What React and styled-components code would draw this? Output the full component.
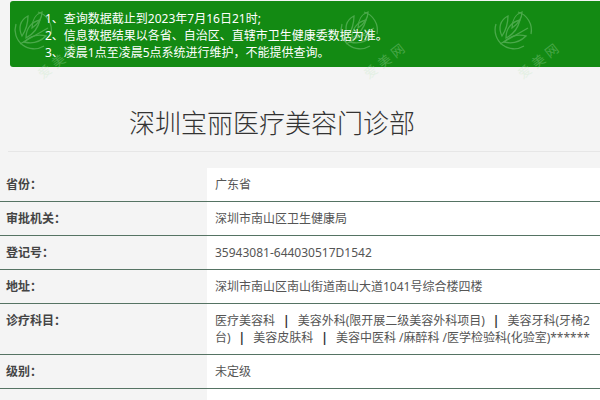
import React from 'react';
import styled, { createGlobalStyle } from 'styled-components';

const GlobalStyle = createGlobalStyle`
  html, body {
    margin: 0;
    padding: 0;
    background: #f4f4f4;
    font-family: "Noto Sans", "Noto Sans CJK SC", sans-serif;
  }
`

const Page = styled.div`
  position: relative;
  width: 600px;
  height: 400px;
  overflow: hidden;
`

const Notice = styled.div`
  margin: 1px 0 0 10px;
  padding: 9px 0 6px 35px;
  background: #138a13;
  border-radius: 3px 0 0 3px;
  color: #fff;
  font-size: 12px;
  line-height: 17px;
`

const Title = styled.h1`
  margin: 0 0 0 8px;
  padding: 37px 64px 11px 0;
  font-family: "Noto Sans CJK SC", sans-serif;
  font-size: 26px;
  line-height: 36px;
  font-weight: 300;
  color: #333;
  text-align: center;
  border-bottom: 1px solid #e6e6e6;
`

const Table = styled.div`
  margin-top: 16px;
`

const Row = styled.div`
  display: grid;
  grid-template-columns: 207px 1fr;
  border-bottom: 1px solid #557363;
`

const Label = styled.div`
  padding: 8px 0 8px 6px;
  font-size: 12px;
  line-height: 17px;
  font-weight: 700;
  color: #444;
`

const Value = styled.div`
  padding: 8px 10px 8px 8px;
  background: #fff;
  font-size: 12px;
  line-height: 17px;
  color: #555;
`

const Sep = styled.b`
  margin: 0 8px;
  color: #333;
`

const Mark = styled.div`
  position: absolute;
  left: ${p => p.x}px;
  top: ${p => p.y}px;
  pointer-events: none;
  opacity: 0.3;
`

const MarkText = styled.span`
  position: absolute;
  left: 26px;
  top: 44px;
  transform: rotate(-38deg);
  font-family: "Noto Sans CJK SC", sans-serif;
  font-size: 13px;
  letter-spacing: 4px;
  color: #bfe8bf;
  white-space: nowrap;
`

function Watermark({ x, y }) {
  return (
    <Mark x={x} y={y}>
      <svg width="48" height="48" viewBox="0 0 48 48" fill="none" stroke="#c8f0c8" strokeWidth="1.3">
        <path d="M8 18 A19 19 0 0 0 36 40" />
        <path d="M30 6 A19 19 0 0 1 43 28" />
        <path d="M14 30 C10 22 12 14 20 10 C20 18 18 24 14 30 Z" />
        <path d="M18 32 C18 22 24 16 32 14 C30 22 26 28 18 32 Z" />
        <path d="M16 36 C22 30 30 28 38 30 C32 36 24 38 16 36 Z" />
        <path d="M24 22 C24 14 28 8 34 6 C34 12 30 18 24 22 Z" />
        <path d="M12 38 L40 22" />
      </svg>
      <MarkText>爱美网</MarkText>
    </Mark>
  )
}

const subjects = ['医疗美容科', '美容外科(限开展二级美容外科项目)', '美容牙科(牙椅2台)', '美容皮肤科', '美容中医科 /麻醉科 /医学检验科(化验室)******']

const rows = [
  ['省份：', '广东省'],
  ['审批机关：', '深圳市南山区卫生健康局'],
  ['登记号：', '35943081-644030517D1542'],
  ['地址：', '深圳市南山区南山街道南山大道1041号综合楼四楼'],
  ['诊疗科目：', subjects.map((s, i) => (
    <React.Fragment key={i}>{i > 0 && <Sep>|</Sep>}{s}</React.Fragment>
  ))],
  ['级别：', '未定级'],
  ['', ''],
]

export default function App() {
  return (
    <Page>
      <GlobalStyle />
      <Notice>
        <div>1、查询数据截止到2023年7月16日21时;</div>
        <div>2、信息数据结果以各省、自治区、直辖市卫生健康委数据为准。</div>
        <div>3、凌晨1点至凌晨5点系统进行维护，不能提供查询。</div>
      </Notice>
      <Title>深圳宝丽医疗美容门诊部</Title>
      <Table>
        {rows.map(([label, value], i) => (
          <Row key={i}>
            <Label>{label}</Label>
            <Value>{value}</Value>
          </Row>
        ))}
      </Table>
      <Watermark x={8} y={6} />
      <Watermark x={334} y={6} />
      <Watermark x={488} y={6} />
    </Page>
  )
}
